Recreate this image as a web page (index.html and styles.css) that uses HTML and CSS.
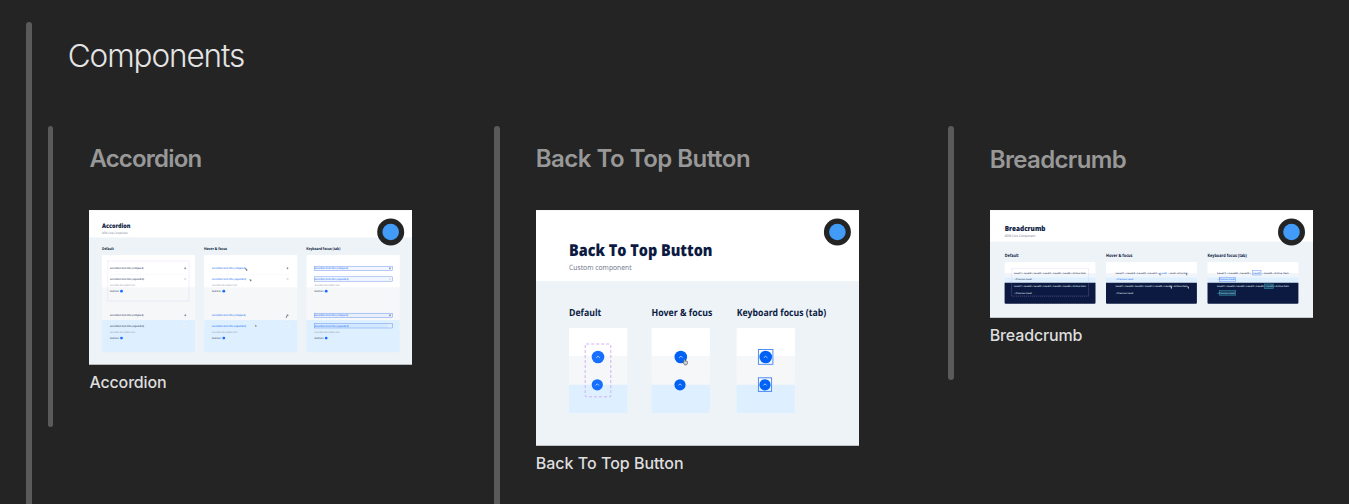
FILE: index.html
```
<!DOCTYPE html>
<html lang="en">
<head>
<meta charset="utf-8">
<title>Components</title>
<link rel="stylesheet" href="styles.css">
</head>
<body>
<main class="board">
  <div class="bar"></div>
  <div class="board-body">
    <h1 class="board-title">Components</h1>
    <div class="columns">

      <section class="group group-short">
        <div class="bar"></div>
        <div class="group-body">
          <h2 class="group-title narrow">Accordion</h2>
          <svg class="thumb" width="323" height="155" viewBox="0 0 323 155">
            <rect class="sheet" width="323" height="155"/>
            <rect class="white" x="0.5" y="0.5" width="322.5" height="27"/>
            <text class="title" x="13" y="18" font-size="6.2" textLength="28.5" lengthAdjust="spacingAndGlyphs">Accordion</text>
            <text class="sub" x="13" y="23.7" font-size="3" textLength="26" lengthAdjust="spacingAndGlyphs">AEM Core Component</text>
            <text class="head" x="13" y="40.1" font-size="3.9" textLength="12" lengthAdjust="spacingAndGlyphs">Default</text>
            <text class="head" x="115" y="40.1" font-size="3.9" textLength="23" lengthAdjust="spacingAndGlyphs">Hover &amp; focus</text>
            <text class="head" x="217.3" y="40.1" font-size="3.9" textLength="34" lengthAdjust="spacingAndGlyphs">Keyboard focus (tab)</text>
            <g id="acc-card">
              <rect class="white" x="12.8" y="45" width="93.2" height="33" rx="1"/>
              <rect class="mist" x="12.8" y="77.3" width="93.2" height="33"/>
              <rect class="sky" x="12.8" y="110" width="93.2" height="32.3" rx="1"/>
              <path d="M21 64.5H98" stroke="#f3f4f6" stroke-width=".5"/>
            </g>
            <use href="#acc-card" x="102.3"/>
            <use href="#acc-card" x="204.7"/>
            <rect class="dash faint" x="18.7" y="51" width="81.3" height="40"/>
            <g class="ink small">
              <text x="21" y="59.3" textLength="33.5" lengthAdjust="spacingAndGlyphs">Accordion item title (collapsed)</text>
              <text x="21" y="70" textLength="34" lengthAdjust="spacingAndGlyphs">Accordion item title (expanded)</text>
              <text class="desc" x="21" y="76.3" textLength="25" lengthAdjust="spacingAndGlyphs">Accordion description text</text>
              <text x="21" y="82.3" textLength="9" lengthAdjust="spacingAndGlyphs">Read more</text>
              <text x="21" y="106.3" textLength="33.5" lengthAdjust="spacingAndGlyphs">Accordion item title (collapsed)</text>
              <text x="21" y="116.7" textLength="34" lengthAdjust="spacingAndGlyphs">Accordion item title (expanded)</text>
              <text class="desc" x="21" y="123.3" textLength="25" lengthAdjust="spacingAndGlyphs">Accordion description text</text>
              <text x="21" y="129" textLength="9" lengthAdjust="spacingAndGlyphs">Read more</text>
            </g>
            <g class="link small">
              <text x="123" y="59.3" textLength="33.5" lengthAdjust="spacingAndGlyphs">Accordion item title (collapsed)</text>
              <text x="123" y="70" textLength="34" lengthAdjust="spacingAndGlyphs">Accordion item title (expanded)</text>
              <text class="desc" x="123" y="76.3" textLength="25" lengthAdjust="spacingAndGlyphs">Accordion description text</text>
              <text class="ink" x="123" y="82.3" textLength="9" lengthAdjust="spacingAndGlyphs">Read more</text>
              <text x="123" y="106.3" textLength="33.5" lengthAdjust="spacingAndGlyphs">Accordion item title (collapsed)</text>
              <text x="123" y="116.7" textLength="34" lengthAdjust="spacingAndGlyphs">Accordion item title (expanded)</text>
              <text class="desc" x="123" y="123.3" textLength="25" lengthAdjust="spacingAndGlyphs">Accordion description text</text>
              <text class="ink" x="123" y="129" textLength="9" lengthAdjust="spacingAndGlyphs">Read more</text>
            </g>
            <g class="focus">
              <rect x="225.3" y="56.2" width="78.2" height="4.4"/>
              <rect x="225.3" y="66.8" width="78.2" height="4.4"/>
              <rect x="225.3" y="103.2" width="78.2" height="4.4"/>
              <rect x="225.3" y="113.6" width="78.2" height="4.4"/>
            </g>
            <g class="link small">
              <text x="225.5" y="59.3" textLength="33.5" lengthAdjust="spacingAndGlyphs">Accordion item title (collapsed)</text>
              <text x="225.5" y="70" textLength="34" lengthAdjust="spacingAndGlyphs">Accordion item title (expanded)</text>
              <text class="desc" x="225.5" y="76.3" textLength="25" lengthAdjust="spacingAndGlyphs">Accordion description text</text>
              <text class="ink" x="225.5" y="82.3" textLength="9" lengthAdjust="spacingAndGlyphs">Read more</text>
              <text x="225.5" y="106.3" textLength="33.5" lengthAdjust="spacingAndGlyphs">Accordion item title (collapsed)</text>
              <text x="225.5" y="116.7" textLength="34" lengthAdjust="spacingAndGlyphs">Accordion item title (expanded)</text>
              <text class="desc" x="225.5" y="123.3" textLength="25" lengthAdjust="spacingAndGlyphs">Accordion description text</text>
              <text class="ink" x="225.5" y="129" textLength="9" lengthAdjust="spacingAndGlyphs">Read more</text>
            </g>
            <g id="acc-marks">
              <circle cx="32.5" cy="81.2" r="1.4" fill="#1a6dff"/>
              <circle cx="32.5" cy="128.1" r="1.4" fill="#1a6dff"/>
              <path d="M95.3 58.3h1.8M96.2 57.4v1.8M95.4 105.3h1.8M96.3 104.4v1.8" stroke="#6a7594" stroke-width=".7"/>
              <circle cx="96.2" cy="69" r="1.4" fill="#f3f4f7"/>
              <circle cx="96.2" cy="115.8" r="1.7" fill="#f3f7fb"/>
              <path d="M95.4 69h1.6M95.4 115.8h1.6" stroke="#a7adbf" stroke-width=".5"/>
            </g>
            <use href="#acc-marks" x="102.3"/>
            <use href="#acc-marks" x="204.7"/>
            <g class="hand">
              <path d="M156 58l1 2.8h1.4l-.3-1.8z"/><path d="M160.5 68.9l.6 2.4h1.4l-.2-1.6z"/>
              <path d="M197.6 105.5l-1 2.3h1.2l.5-2.3z"/><path d="M166 114.8l.4 2h1.2l-.2-1.4z"/>
            </g>
            <rect class="edge" x="0" y="154.2" width="323" height=".8"/>
            <circle class="ring" cx="301.7" cy="22" r="13.5"/><circle class="dot" cx="301.7" cy="22" r="8.3"/>
          </svg>
          <p class="caption tight">Accordion</p>
        </div>
      </section>

      <section class="group">
        <div class="bar"></div>
        <div class="group-body">
          <h2 class="group-title">Back To Top Button</h2>
          <svg class="thumb" width="323" height="236" viewBox="0 0 323 236">
            <rect class="sheet" width="323" height="236"/>
            <rect class="white" x="0" y="0.5" width="323" height="70.5"/>
            <text class="title" x="33" y="46" font-size="16.4" textLength="143.5" lengthAdjust="spacingAndGlyphs">Back To Top Button</text>
            <text class="sub" x="33" y="60" font-size="7.3" textLength="62.7" lengthAdjust="spacingAndGlyphs">Custom component</text>
            <text class="head" x="33" y="105.6" font-size="9.8" textLength="32.3" lengthAdjust="spacingAndGlyphs">Default</text>
            <text class="head" x="115.5" y="105.6" font-size="9.8" textLength="60.8" lengthAdjust="spacingAndGlyphs">Hover &amp; focus</text>
            <text class="head" x="200.7" y="105.6" font-size="9.8" textLength="89.6" lengthAdjust="spacingAndGlyphs">Keyboard focus (tab)</text>
            <g id="top-card">
              <rect class="white" x="33" y="118" width="58.3" height="30" rx="1.3"/>
              <rect class="sky" x="33" y="170" width="58.3" height="33" rx="1.3"/>
              <rect class="mist" x="33" y="146" width="58.3" height="28.8"/>
            </g>
            <use href="#top-card" x="82.6"/>
            <use href="#top-card" x="167.6"/>
            <rect class="dash" x="49.2" y="134" width="25.6" height="52.8" rx="1"/>
            <g fill="#176fff">
              <circle cx="62" cy="147" r="6.3"/><circle cx="61.3" cy="174.8" r="5.6"/>
            </g>
            <g fill="#0061f5">
              <circle cx="144.8" cy="147" r="6.3"/><circle cx="144" cy="174.8" r="5.6"/>
              <circle cx="229.7" cy="147" r="6.3"/><circle cx="229" cy="174.8" r="5.6"/>
            </g>
            <g class="chevrons">
              <path d="M60.2 147.9L62 146.1l1.8 1.8M59.6 175.5l1.7-1.7 1.7 1.7"/>
              <path d="M143 147.9l1.8-1.8 1.8 1.8M142.3 175.5l1.7-1.7 1.7 1.7"/>
              <path d="M227.9 147.9l1.8-1.8 1.8 1.8M227.3 175.5l1.7-1.7 1.7 1.7"/>
            </g>
            <g fill="none" stroke="#4284f2" stroke-width=".9">
              <rect x="222.4" y="139.5" width="14.5" height="14.8"/><rect x="222.4" y="167.8" width="13.2" height="13.6"/>
            </g>
            <path d="M147.7 150.1c.6-1 1.1-.4 1.4.8l2.2.4c.6 1.2 0 2.8-.8 3.6h-1.8l-1.7-2.7.9-.1z" fill="#d4d4d2" stroke="#56595d" stroke-width=".7"/>
            <rect class="edge" x="0" y="235.3" width="323" height=".7"/>
            <circle class="ring" cx="301.4" cy="22" r="13.5"/><circle class="dot" cx="301.4" cy="22" r="8.3"/>
          </svg>
          <p class="caption">Back To Top Button</p>
        </div>
      </section>

      <section class="group group-shorter">
        <div class="bar"></div>
        <div class="group-body">
          <h2 class="group-title low">Breadcrumb</h2>
          <svg class="thumb" width="323" height="108" viewBox="0 0 323 108">
            <defs><linearGradient id="fade" x1="0" y1="0" x2="0" y2="1"><stop offset="0" stop-color="#fff"/><stop offset=".1" stop-color="#f3f6f9"/><stop offset=".45" stop-color="#eef5fb"/><stop offset=".55" stop-color="#def0ff"/><stop offset="1" stop-color="#def0ff"/></linearGradient></defs>
            <rect class="sheet" width="323" height="108"/>
            <rect class="white" x="0.3" y="0.5" width="322.7" height="31.2"/>
            <text class="title" x="14.7" y="20.6" font-size="7.1" textLength="40.8" lengthAdjust="spacingAndGlyphs">Breadcrumb</text>
            <text class="sub" x="14.7" y="27" font-size="3.4" textLength="30.5" lengthAdjust="spacingAndGlyphs">AEM Core Component</text>
            <text class="head" x="14.7" y="46.5" font-size="4.4" textLength="14" lengthAdjust="spacingAndGlyphs">Default</text>
            <text class="head" x="116" y="46.5" font-size="4.4" textLength="26.5" lengthAdjust="spacingAndGlyphs">Hover &amp; focus</text>
            <text class="head" x="217.5" y="46.5" font-size="4.4" textLength="39.3" lengthAdjust="spacingAndGlyphs">Keyboard focus (tab)</text>
            <g id="crumb-card">
              <rect class="white" x="14.6" y="52" width="90.9" height="12" rx="1"/>
              <rect x="14.6" y="62.5" width="90.9" height="10.3" fill="url(#fade)"/>
              <path d="M14.6 72.7h90.9v20a1 1 0 0 1-1 1h-88.9a1 1 0 0 1-1-1z" fill="#0c1a42"/>
            </g>
            <use href="#crumb-card" x="101.4"/>
            <use href="#crumb-card" x="202.9"/>
            <rect class="dash faint" x="21.6" y="58.6" width="77" height="27.5"/>
            <g class="ink crumb">
              <text x="24" y="63.7" textLength="72" lengthAdjust="spacingAndGlyphs">Level1   ›   Level2   ›   Level3   ›   Level4   ›   Level5   ›   Level6   ›   Active item</text>
              <text x="24.5" y="70.3" textLength="17.2" lengthAdjust="spacingAndGlyphs">‹  Previous Level</text>
              <text x="125.5" y="63.7" textLength="43" lengthAdjust="spacingAndGlyphs">Level1   ›   Level2   ›   Level3   ›   Level4   ›</text>
              <text class="link" x="170.3" y="63.7" textLength="6.5" lengthAdjust="spacingAndGlyphs">Level5</text>
              <text x="178.5" y="63.7" textLength="19" lengthAdjust="spacingAndGlyphs">›   Level6   ›   Active item</text>
              <text class="link" x="126" y="70.3" textLength="17.2" lengthAdjust="spacingAndGlyphs">‹  Previous Level</text>
              <text x="227" y="63.7" textLength="34" lengthAdjust="spacingAndGlyphs">Level1   ›   Level2   ›   Level3   ›</text>
              <text class="link" x="263.3" y="63.7" textLength="7" lengthAdjust="spacingAndGlyphs">Level5</text>
              <text x="272.3" y="63.7" textLength="26.5" lengthAdjust="spacingAndGlyphs">›   Level6   ›   Active item</text>
              <text class="link" x="227.5" y="70.3" textLength="17.2" lengthAdjust="spacingAndGlyphs">‹  Previous Level</text>
            </g>
            <g class="light crumb">
              <text x="24" y="77.3" textLength="72" lengthAdjust="spacingAndGlyphs">Level1   ›   Level2   ›   Level3   ›   Level4   ›   Level5   ›   Level6   ›   Active item</text>
              <text x="24.5" y="83.8" textLength="17.2" lengthAdjust="spacingAndGlyphs">‹  Previous Level</text>
              <text x="125.5" y="77.3" textLength="72" lengthAdjust="spacingAndGlyphs">Level1   ›   Level2   ›   Level3   ›   Level4   ›   Level5   ›   Level6   ›   Active item</text>
              <text x="126" y="83.8" textLength="17.2" lengthAdjust="spacingAndGlyphs">‹  Previous Level</text>
              <text x="227" y="77.3" textLength="72" lengthAdjust="spacingAndGlyphs">Level1   ›   Level2   ›   Level3   ›   Level4   ›   Level5   ›   Level6   ›   Active item</text>
              <text x="227.5" y="83.8" textLength="17.2" lengthAdjust="spacingAndGlyphs">‹  Previous Level</text>
            </g>
            <g class="focus"><rect x="262.4" y="60.4" width="8.6" height="4.6"/><rect x="229.5" y="67.2" width="16.2" height="4.6"/></g>
            <g fill="#2c829d" fill-opacity=".4" stroke="#318aa0" stroke-width=".6"><rect x="274.6" y="74" width="8.7" height="4.6"/><rect x="229.5" y="80.6" width="16.2" height="4.6"/></g>
            <g class="hand"><path d="M169 62.8l.6 2.5h1.2l-.3-1.6zM195.8 62.8l.4 2.5h1.1l-.3-1.6z"/></g>
            <path d="M180.5 76l.4 2.6h1.2l-.4-1.8zM197.5 76l.4 2.6h1l-.3-1.8z" fill="#d7dbe2"/>
            <rect class="edge" x="0" y="107.4" width="323" height=".6"/>
            <circle class="ring" cx="301.5" cy="22" r="13.5"/><circle class="dot" cx="301.5" cy="22" r="8.3"/>
          </svg>
          <p class="caption tight">Breadcrumb</p>
        </div>
      </section>

    </div>
  </div>
</main>
</body>
</html>
```

FILE: styles.css
```
* { box-sizing: border-box; }
body {
  margin: 0;
  height: 504px;
  overflow: hidden;
  background: #242424;
  font-family: Inter, "Liberation Sans", sans-serif;
}
h1, h2, p { margin: 0; }
.board { display: flex; height: 504px; padding: 22px 0 0 26px; overflow: hidden; }
.bar { flex: none; width: 5.6px; border-radius: 3px 3px 0 0; background: #5a5a5a; }
.board-body { flex: none; padding-left: 16.2px; }
.board-title {
  height: 104px;
  padding: 15px 0 0 20px;
  color: #e4e4e4;
  font-size: 31.5px;
  font-weight: 300;
  line-height: 38px;
  letter-spacing: -1.1px;
}
.columns { display: grid; grid-template-columns: 446.4px 454px 365px; align-items: start; }
.group { display: flex; height: 400px; }
.group-short { height: 301px; }
.group-shorter { height: 254px; }
.group .bar { border-radius: 3px; }
.group-body { flex: none; padding-left: 36px; }
.group-title {
  height: 84px;
  padding-top: 18px;
  color: #989898;
  font-size: 24px;
  font-weight: 600;
  line-height: 30px;
  letter-spacing: -0.5px;
  white-space: nowrap;
}
.narrow { letter-spacing: -0.8px; }
.low { padding-top: 19px; letter-spacing: -0.65px; }
.thumb {
  display: block;
  overflow: hidden;
  font-family: "Open Sans", "Noto Sans", sans-serif;
  text-rendering: geometricPrecision;
}
.caption {
  padding-top: 7px;
  color: #dedede;
  font-size: 16px;
  font-weight: 500;
  line-height: 20px;
  white-space: nowrap;
}
.tight { letter-spacing: -0.15px; }
.sheet { fill: #edf3f7; }
.white { fill: #fff; }
.mist { fill: #f5f7f9; }
.sky { fill: #def0ff; }
.edge { fill: #a9adb0; }
.title { fill: #0c1a42; font-weight: 800; }
.head { fill: #0c1a42; font-weight: 700; }
.sub { fill: #6b7389; }
.small { font-size: 2.6px; font-weight: 600; }
.crumb { font-size: 2.5px; font-weight: 600; white-space: pre; }
.ink { fill: #35405f; }
.link { fill: #2873f5; }
.light { fill: #dfe3eb; }
.desc { fill: #8b91a2; font-weight: 400; }
.dash { fill: none; stroke: #cfa8f5; stroke-width: .9; stroke-dasharray: 3 2; }
.faint { stroke-width: .3; stroke-dasharray: 1.3 .7; }
.focus { fill: #5c93ff; fill-opacity: .08; stroke: #628ff0; stroke-width: .45; }
.focus rect { vector-effect: none; }
.hand { fill: #777b82; }
.chevrons { fill: none; stroke: #b8d5ff; stroke-width: .9; }
.ring { fill: #242424; }
.dot { fill: #429bf7; }
```
